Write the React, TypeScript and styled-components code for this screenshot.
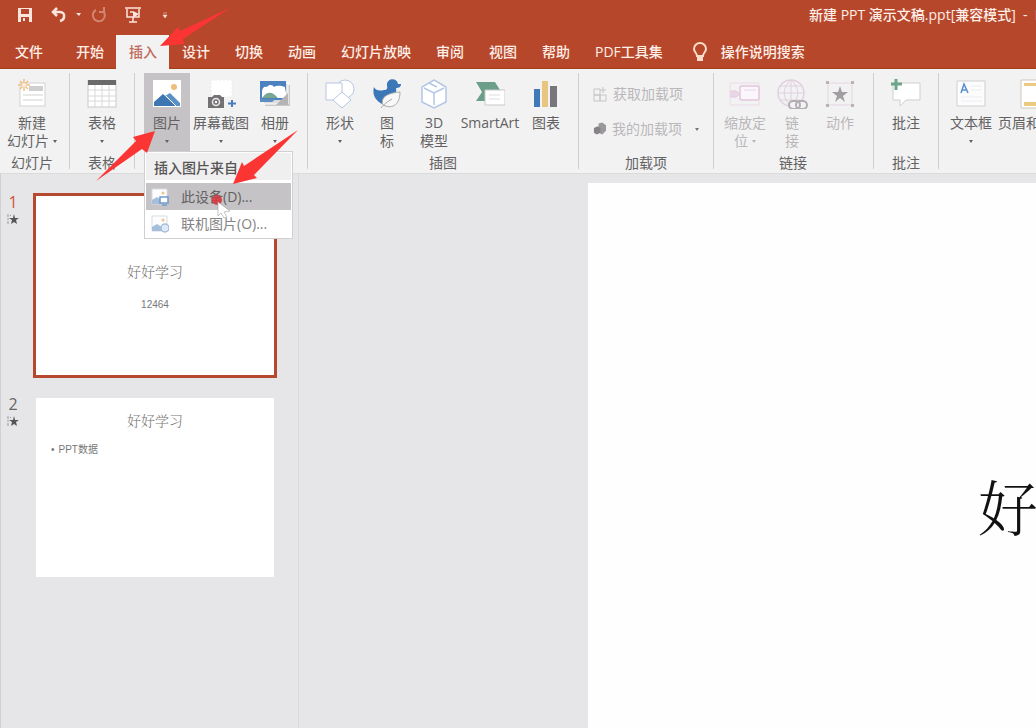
import React from 'react';
import styled, { createGlobalStyle } from 'styled-components';

const GlobalStyle = createGlobalStyle`
  * { box-sizing: border-box; }
  body {
    margin: 0;
    overflow: hidden;
    background: #e6e6e8;
    color: #555;
    font-family: "Open Sans", "Noto Sans CJK SC", sans-serif;
    font-size: 14px;
    line-height: 18px;
  }
  button { font: inherit; color: inherit; background: none; border: 0; padding: 0; margin: 0; }
`;

const Shell = styled.div`
  position: relative;
  display: flex;
  flex-direction: column;
  height: 100vh;
  overflow: hidden;
`;

const TitleBar = styled.header`
  display: flex;
  align-items: center;
  height: 35px;
  padding: 0 0 6px 17px;
  background: #b7472a;
  color: #fdeee8;
`;

const QuickTools = styled.div`
  display: flex;
  align-items: center;
  flex: none;
`;

const QuickButton = styled.button<{ $w?: number; $faded?: boolean }>`
  display: flex;
  justify-content: center;
  width: ${p => p.$w ?? 16}px;
  opacity: ${p => (p.$faded ? 0.4 : 1)};
`;

const DocTitle = styled.div`
  margin-left: 638px;
  white-space: nowrap;
  font-weight: 500;
`;

const TabBar = styled.nav`
  display: flex;
  height: 34px;
  background: #b7472a;
  border-bottom: 1px solid #a63d12;
`;

const Tab = styled.button<{ $active?: boolean; $file?: boolean }>`
  flex: none;
  height: 34px;
  padding: ${p => (p.$file ? '0 20px 0 15px' : '0 12px 0 13px')};
  white-space: nowrap;
  font-weight: 500;
  color: ${p => (p.$active ? '#bf6a5a' : '#fdeee8')};
  background: ${p => (p.$active ? '#f3f2f3' : 'transparent')};
`;

const TellMe = styled.button`
  display: flex;
  align-items: center;
  gap: 13px;
  margin-left: 17px;
  white-space: nowrap;
  font-weight: 500;
  color: #fdeee8;
`;

const Ribbon = styled.div`
  display: flex;
  flex: none;
  height: 105px;
  padding: 4px 0;
  background: #f3f2f3;
  border-bottom: 1px solid #dcdbdc;
`;

const Group = styled.section<{ $pad?: string }>`
  display: flex;
  flex-direction: column;
  flex: none;
  padding: ${p => p.$pad ?? '0'};
  border-right: 1px solid #d0cfd0;
  &:last-child { border-right: 0; }
`;

const Tools = styled.div`
  display: flex;
  flex: 1;
`;

const GroupName = styled.div`
  height: 18px;
  margin-bottom: -3px;
  text-align: center;
  white-space: nowrap;
  color: #626262;
`;

const ToolSlot = styled.div`
  position: relative;
  display: flex;
`;

const ToolButton = styled.button<{ $w: number; $active?: boolean; $disabled?: boolean }>`
  display: flex;
  flex-direction: column;
  align-items: center;
  width: ${p => p.$w}px;
  height: 78px;
  padding-top: 6px;
  white-space: nowrap;
  color: ${p => (p.$disabled ? '#b9b7b9' : '#626262')};
  background: ${p => (p.$active ? '#c5c3c5' : 'transparent')};
  svg { flex: none; }
`;

const ToolText = styled.span`
  display: flex;
  align-items: center;
  justify-content: center;
  gap: 4px;
  height: 18px;
`;

const FirstLine = styled(ToolText)`
  margin-top: 5px;
`;

const Caret = styled.span`
  width: 0;
  border: 2px solid transparent;
  border-top: 3px solid currentColor;
  border-bottom: 0;
`;

const AddinList = styled.div`
  display: flex;
  flex-direction: column;
  gap: 15px;
  width: 134px;
  padding: 11px 14px 0;
`;

const AddinButton = styled.button`
  display: flex;
  align-items: center;
  gap: 6px;
  height: 20px;
  white-space: nowrap;
  color: #b9b7b9;
  ${Caret} { margin-left: 7px; color: #777; }
`;

const Menu = styled.div`
  position: absolute;
  z-index: 2;
  top: 78px;
  left: 0;
  width: 149px;
  padding: 1px;
  background: #fff;
  border: 1px solid #d0cfd1;
`;

const MenuTitle = styled.div`
  height: 27px;
  margin-bottom: 3px;
  padding: 5px 8px;
  line-height: 20px;
  font-weight: 500;
  background: #f0eff0;
`;

const MenuItem = styled.button<{ $hover?: boolean }>`
  display: flex;
  align-items: center;
  gap: 12px;
  width: 100%;
  height: 27px;
  padding-left: 5px;
  white-space: nowrap;
  color: ${p => (p.$hover ? '#626062' : '#858385')};
  background: ${p => (p.$hover ? '#c5c3c5' : 'transparent')};
`;

const Pointer = styled.svg`
  position: absolute;
  top: 42px;
  left: 65px;
  pointer-events: none;
`;

const Workspace = styled.div`
  display: flex;
  flex: 1;
  min-height: 0;
`;

const SlideList = styled.aside`
  display: flex;
  flex-direction: column;
  flex: none;
  gap: 17px;
  width: 299px;
  padding-top: 19px;
  border-left: 1px solid #d0d0d2;
  border-right: 1px solid #dadadc;
`;

const SlideRow = styled.div`
  display: flex;
`;

const SlideNumber = styled.div<{ $active?: boolean }>`
  display: flex;
  flex-direction: column;
  align-items: center;
  gap: 2px;
  width: 32px;
  padding-right: 8px;
  font-size: 16px;
  color: ${p => (p.$active ? '#d0523f' : '#666')};
`;

const Thumb = styled.button<{ $active?: boolean }>`
  display: flex;
  flex-direction: column;
  width: 244px;
  height: 185px;
  color: #777;
  background: #fff;
  background-clip: padding-box;
  border: 3px solid ${p => (p.$active ? '#b5482f' : 'transparent')};
`;

const songFont = `"Noto Serif CJK SC", "Noto Sans CJK SC", serif`;

const ThumbTitle = styled.div<{ $cover?: boolean }>`
  width: 100%;
  margin-top: ${p => (p.$cover ? 66 : 13)}px;
  text-align: center;
  font-family: ${songFont};
  font-weight: 300;
`;

const ThumbText = styled.div<{ $cover?: boolean }>`
  display: flex;
  justify-content: ${p => (p.$cover ? 'center' : 'flex-start')};
  gap: 4px;
  width: 100%;
  margin-top: ${p => (p.$cover ? 16 : 12)}px;
  padding-left: ${p => (p.$cover ? 0 : 15)}px;
  font-family: "Liberation Sans", "Noto Sans CJK SC", sans-serif;
  font-size: 10px;
`;

const Stage = styled.main`
  display: flex;
  flex: 1;
  min-width: 0;
  padding: 9px 0 0 289px;
`;

const Slide = styled.div`
  flex: 1;
  min-width: 0;
  overflow: hidden;
  padding: 278px 0 0 390px;
  background: #fefefe;
`;

const SlideTitle = styled.h1`
  margin: 0;
  white-space: nowrap;
  font-family: ${songFont};
  font-size: 60px;
  line-height: 88px;
  font-weight: 300;
  color: #111;
`;

const Annotations = styled.svg`
  position: absolute;
  z-index: 3;
  top: 0;
  left: 0;
  pointer-events: none;
`;

type IconProps = { children: React.ReactNode; w?: number; h?: number };
const Icon = ({ children, w = 30, h = 30 }: IconProps) => (
  <svg width={w} height={h} viewBox={`0 0 ${w} ${h}`} fill="none" aria-hidden="true">{children}</svg>
);

const NewSlideIcon = () => (
  <Icon>
    <rect x="3" y="4" width="25" height="23" fill="#fff" stroke="#d2d2d2" />
    <path d="M12 7h14v5H12z" fill="#cfcfcf" />
    <path d="M6 16h20M6 21h20" stroke="#e8e8e8" strokeWidth="2" />
    <path d="M7 0v12M1 6h12M3 2l8 8M11 2l-8 8" stroke="#efc188" strokeWidth="1.5" />
    <circle cx="7" cy="6" r="2" fill="#fdf3e2" />
  </Icon>
);
const TableIcon = () => (
  <Icon>
    <rect x="1" y="2" width="28" height="26" fill="#fff" stroke="#c8c8c8" />
    <path d="M1 1h28v5H1z" fill="#6b6a6b" />
    <path d="M1 11h28M1 17h28M1 22h28M8 6v22M15 6v22M22 6v22" stroke="#d8d8d8" />
  </Icon>
);
const PictureIcon = () => (
  <Icon>
    <path d="M1 1h28v27H1z" fill="#fff" />
    <circle cx="22" cy="8" r="3" fill="#edbd79" />
    <path d="M2 27v-4l9-8 13 12z" fill="#3e76b2" />
    <path d="M13 17l5-3 10 10v3h-5z" fill="#5b90c4" />
    <path d="M14 17l10 10" stroke="#fff" />
  </Icon>
);
const ScreenshotIcon = () => (
  <Icon w={38}>
    <path d="M9 1h21v17H9z" fill="#fff" stroke="#ececec" strokeDasharray="2 2" />
    <path d="M6 18h4l2-2h6l2 2h2v11H6z" fill="#737173" />
    <circle cx="14" cy="23" r="3.5" fill="#737173" stroke="#e9e9e9" strokeWidth="1.5" />
    <circle cx="14" cy="23" r="1.2" fill="#fff" />
    <path d="M30 21v7M26 24.500h8" stroke="#4a7ebb" strokeWidth="2" />
  </Icon>
);
const AlbumIcon = () => (
  <Icon>
    <path d="M5 6h25v21H5z" fill="#c9c9cb" />
    <path d="M3 4h25v21H3z" fill="#dedee0" stroke="#fff" />
    <path d="M0 2h26v19H0z" fill="#4c82bd" />
    <path d="M2 13c0-4 2-6 5-5 2-3 6-2 7 0 4-2 7-1 11 0v11H2z" fill="#fff" />
    <path d="M2 19c5-7 10-7 16 0z" fill="#78a892" />
    <path d="M17 19l8-10 2 10z" fill="#fff" />
    <path d="M0 20h16l-4 3H0z" fill="#5c8ec4" />
    <path d="M16 26l12-12v12z" fill="#b4b4b6" />
  </Icon>
);
const ShapesIcon = () => (
  <Icon>
    <circle cx="20" cy="10" r="9" fill="#fff" stroke="#b7c5e2" />
    <path d="M1 4h16v17H1z" fill="#fff" stroke="#b7c5e2" />
    <path d="M17 13l9 8-9 8-9-8z" fill="#fff" stroke="#b7c5e2" />
  </Icon>
);
const DuckIcon = () => (
  <Icon>
    <path d="M2 8c2 4 6 4 10 3 2 0 4-1 3-4-1-8 10-9 11-2h3c0 3-2 4-5 4 1 4-1 6-5 8L10 25C3 21 0 15 2 8z" fill="#3c78b8" />
    <path d="M11 26c-3-8 5-12 17-13 0 11-6 18-17 13z" fill="#f8f8f8" stroke="#aaa" />
    <path d="M9 29c3-4 6-6 11-9" stroke="#aaa" />
  </Icon>
);
const CubeIcon = () => (
  <Icon>
    <path d="M15 1l12 7v15l-12 6-12-6V8z" fill="#fff" stroke="#b4c6e6" strokeWidth="1.5" />
    <path d="M5 9l10 5 10-5M15 14v12M10 4l8 4" stroke="#b4c6e6" strokeWidth="1.5" />
  </Icon>
);
const SmartArtIcon = () => (
  <Icon>
    <path d="M1 3h19l5 8H10v11H1l6-9z" fill="#6c9f89" />
    <path d="M10 11h20v15H10z" fill="#fff" stroke="#c9c9c9" />
    <path d="M14 16h11M14 20h11" stroke="#ddd" />
  </Icon>
);
const ChartIcon = () => (
  <Icon>
    <path d="M3 10h6v18H3z" fill="#4079b9" />
    <path d="M11 2h6v26h-6z" fill="#e8c581" />
    <path d="M19 7h7v21h-7z" fill="#77767b" />
  </Icon>
);
const ZoomIcon = () => (
  <Icon w={32}>
    <path d="M1 4h29v22H1z" stroke="#ecdbe9" />
    <rect x="11" y="7" width="19" height="14" rx="2" fill="#fbf6fb" stroke="#e3c6dd" strokeWidth="1.5" />
    <path d="M1 12h6l4 3-4 3H1" fill="#e8d6e5" stroke="#e3cade" />
    <path d="M15 11h12" stroke="#e8d6e5" />
  </Icon>
);
const LinkIcon = () => (
  <Icon w={32}>
    <circle cx="15" cy="14" r="13" stroke="#e0d0df" strokeWidth="1.5" />
    <path d="M2 14h26M15 1v26M4 7h22M4 21h22M15 1c-9 8-9 18 0 26M15 1c9 8 9 18 0 26" stroke="#e0d0df" />
    <rect x="13" y="22" width="11" height="8" rx="4" fill="#f3f2f3" stroke="#b1adb1" strokeWidth="2" />
    <rect x="20" y="22" width="11" height="8" rx="4" stroke="#b1adb1" strokeWidth="2" />
  </Icon>
);
const ActionIcon = () => (
  <Icon>
    <path d="M3 4h24v22H3z" stroke="#e2d3e0" />
    <path d="M15 7l2 6h6l-5 4 2 6-5-4-5 4 2-6-5-4h6z" fill="#a29fa2" />
    <path d="M1 2h3v3H1zM26 2h3v3h-3zM1 25h3v3H1zM26 25h3v3h-3z" fill="#b9b1b8" />
  </Icon>
);
const CommentIcon = () => (
  <Icon>
    <path d="M2 4h27v17H15l-6 6v-6H2z" fill="#fff" stroke="#cfcfcf" />
    <path d="M5 0v11M0 5h11" stroke="#6aa58c" strokeWidth="3" />
  </Icon>
);
const TextBoxIcon = () => (
  <Icon>
    <path d="M1 2h28v25H1z" fill="#fcfcfd" stroke="#cfcfd2" />
    <path d="M5 14l3-9 4 9M6 11h5" stroke="#5b8fcc" strokeWidth="1.5" />
    <path d="M15 7h11M15 11h11M5 18h21M5 22h21" stroke="#eeeef1" />
  </Icon>
);
const HeaderIcon = () => (
  <Icon>
    <path d="M3 1h26v28H3z" fill="#fff" stroke="#cfc6bd" />
    <path d="M6 4h20v3H6zM6 23h20v4H6z" fill="#ecca84" />
  </Icon>
);
const MenuPicture = ({ online }: { online?: boolean }) => (
  <Icon w={18} h={18}>
    <path d="M1 1h15v15H1z" fill="#fdfdfd" stroke="#d5dbe3" />
    <circle cx="12" cy="5" r="1.5" fill="#efc48c" />
    <path d="M1 16v-4l5-3 6 4v3z" fill="#a5bedb" />
    {online
      ? <circle cx="14" cy="13" r="4" fill="#dfeaf6" stroke="#a5bedb" strokeWidth="1.5" />
      : <path d="M9 9h8v6H9zM11 17h5" fill="#fff" stroke="#6f9aca" strokeWidth="1.5" />}
  </Icon>
);
const StarIcon = () => (
  <Icon w={12} h={12}>
    <path d="M7 1l1 4h4L9 7l1 4-3-2-3 2 1-4-3-2h4z" fill="#555" />
    <path d="M1 1v3M0 6h2M1 8v3M3 2l1 1" stroke="#999" />
  </Icon>
);

type ToolProps = {
  icon: React.ReactNode; w: number; text: string; second?: string;
  menu?: boolean; active?: boolean; disabled?: boolean;
};
const Tool = ({ icon, w, text, second, menu, active, disabled }: ToolProps) => (
  <ToolButton type="button" $w={w} $active={active} $disabled={disabled}>
    {icon}
    <FirstLine>{text}</FirstLine>
    {(second || menu) && <ToolText>{second}{menu && <Caret />}</ToolText>}
  </ToolButton>
);

const tabs = ['文件', '开始', '插入', '设计', '切换', '动画', '幻灯片放映', '审阅', '视图', '帮助', 'PDF工具集'];

export default function App() {
  return (
    <Shell>
      <GlobalStyle />
      <TitleBar>
        <QuickTools>
          <QuickButton type="button" aria-label="保存">
            <Icon w={16} h={16}>
              <path d="M1 1h14v14H1z" fill="#fbe5dd" />
              <path d="M4 2h8v5H4zM4 10h8v5H4z" fill="#b7472a" />
              <path d="M6 11h2v3H6z" fill="#fbe5dd" />
            </Icon>
          </QuickButton>
          <QuickButton type="button" aria-label="撤消" $w={58}>
            <Icon w={58} h={16}>
              <path d="M20 5h7c6 0 5 8 0 9M24 1l-4 4 4 4" stroke="#fbe5dd" strokeWidth="2.500" />
              <path d="M43 6h5l-2 3z" fill="#fbe5dd" />
            </Icon>
          </QuickButton>
          <QuickButton type="button" aria-label="恢复" $faded>
            <Icon w={16} h={16}><path d="M5 3a6 6 0 1 0 7 1M13 0v5H8" stroke="#fbe5dd" strokeWidth="2" /></Icon>
          </QuickButton>
          <QuickButton type="button" aria-label="从头开始" $w={52}>
            <Icon w={18} h={18}>
              <path d="M1 2h16M3 3v8h12V3M9 11v5M5 16h8M6 6h3" stroke="#fbe5dd" strokeWidth="1.5" />
              <path d="M9 5l6 3-6 4z" fill="#fbe5dd" />
            </Icon>
          </QuickButton>
          <QuickButton type="button" aria-label="自定义快速访问工具栏" $w={12}>
            <Icon w={8} h={8}><path d="M2 2h4M2 4h4L4 7z" stroke="#fbe5dd" fill="#fbe5dd" strokeWidth="0.5" /></Icon>
          </QuickButton>
        </QuickTools>
        <DocTitle>新建 PPT 演示文稿.ppt[兼容模式] &nbsp;- &nbsp;PowerPoint</DocTitle>
      </TitleBar>

      <TabBar>
        {tabs.map(t => (
          <Tab key={t} type="button" $file={t === '文件'} $active={t === '插入'}>{t}</Tab>
        ))}
        <TellMe type="button">
          <Icon w={16} h={20}>
            <path d="M5 14c0-3-3-4-3-7a6 6 0 0 1 12 0c0 3-3 4-3 7z" stroke="#fbdccb" strokeWidth="2" />
            <path d="M5 15h6v4H5z" fill="#fbdccb" />
          </Icon>
          操作说明搜索
        </TellMe>
      </TabBar>

      <Ribbon>
        <Group $pad="0 6px 0 1px">
          <Tools><Tool icon={<NewSlideIcon />} w={62} text="新建" second="幻灯片" menu /></Tools>
          <GroupName>幻灯片</GroupName>
        </Group>
        <Group>
          <Tools><Tool icon={<TableIcon />} w={64} text="表格" menu /></Tools>
          <GroupName>表格</GroupName>
        </Group>
        <Group $pad="0 9px">
          <Tools>
            <ToolSlot>
              <Tool icon={<PictureIcon />} w={46} text="图片" menu active />
              <Menu>
                <MenuTitle>插入图片来自</MenuTitle>
                <MenuItem type="button" $hover><MenuPicture />此设备(D)...</MenuItem>
                <MenuItem type="button"><MenuPicture online />联机图片(O)...</MenuItem>
                <Pointer width="22" height="26" viewBox="0 0 22 26" aria-hidden="true">
                  <circle cx="7" cy="6" r="5" fill="#d83a40" opacity="0.9" />
                  <path d="M8 8l12 9-6 1 3 5-3 1-3-5-3 3z" fill="#fff" stroke="#aaa" strokeWidth="0.7" />
                </Pointer>
              </Menu>
            </ToolSlot>
            <Tool icon={<ScreenshotIcon />} w={62} text="屏幕截图" menu />
            <Tool icon={<AlbumIcon />} w={46} text="相册" menu />
          </Tools>
        </Group>
        <Group $pad="0 8px">
          <Tools>
            <Tool icon={<ShapesIcon />} w={48} text="形状" menu />
            <Tool icon={<DuckIcon />} w={46} text="图" second="标" />
            <Tool icon={<CubeIcon />} w={48} text="3D" second="模型" />
            <Tool icon={<SmartArtIcon />} w={64} text="SmartArt" />
            <Tool icon={<ChartIcon />} w={48} text="图表" />
          </Tools>
          <GroupName>插图</GroupName>
        </Group>
        <Group>
          <Tools>
            <AddinList>
              <AddinButton type="button">
                <Icon w={14} h={16}><path d="M1 3h6v6H1zM1 9h6v6H1zM7 9h6v6H7zM10 1v6M7 4h6" stroke="#c6c4c6" /></Icon>
                获取加载项
              </AddinButton>
              <AddinButton type="button">
                <Icon w={14} h={16}>
                  <path d="M6 2l4-1 4 3v6l-4 4-4-2z" fill="#9a989a" />
                  <path d="M1 7l4-2 3 2v5l-4 2-3-2z" fill="#868486" />
                </Icon>
                我的加载项
                <Caret />
              </AddinButton>
            </AddinList>
          </Tools>
          <GroupName>加载项</GroupName>
        </Group>
        <Group $pad="0 2px 0 1px">
          <Tools>
            <Tool icon={<ZoomIcon />} w={60} text="缩放定" second="位" menu disabled />
            <Tool icon={<LinkIcon />} w={34} text="链" second="接" disabled />
            <Tool icon={<ActionIcon />} w={62} text="动作" disabled />
          </Tools>
          <GroupName>链接</GroupName>
        </Group>
        <Group>
          <Tools><Tool icon={<CommentIcon />} w={64} text="批注" /></Tools>
          <GroupName>批注</GroupName>
        </Group>
        <Group>
          <Tools>
            <Tool icon={<TextBoxIcon />} w={64} text="文本框" menu />
            <Tool icon={<HeaderIcon />} w={60} text="页眉和页脚" />
          </Tools>
        </Group>
      </Ribbon>

      <Workspace>
        <SlideList>
          <SlideRow>
            <SlideNumber $active>1<StarIcon /></SlideNumber>
            <Thumb type="button" $active>
              <ThumbTitle $cover>好好学习</ThumbTitle>
              <ThumbText $cover>12464</ThumbText>
            </Thumb>
          </SlideRow>
          <SlideRow>
            <SlideNumber>2<StarIcon /></SlideNumber>
            <Thumb type="button">
              <ThumbTitle>好好学习</ThumbTitle>
              <ThumbText><span>•</span><span>PPT数据</span></ThumbText>
            </Thumb>
          </SlideRow>
        </SlideList>
        <Stage>
          <Slide><SlideTitle>好好学习</SlideTitle></Slide>
        </Stage>
      </Workspace>

      <Annotations width="300" height="186" viewBox="0 0 300 186" aria-hidden="true">
        <g fill="#fb3534">
          <path d="M160 46L178 27l2 4 50-23-47 31 1 5z" />
          <path d="M155 131l-22 6 3 4-40 40 46-32 5 4z" />
          <path d="M233 184l9-22 2 4 54-36-44 45 3 3z" />
        </g>
      </Annotations>
    </Shell>
  );
}
